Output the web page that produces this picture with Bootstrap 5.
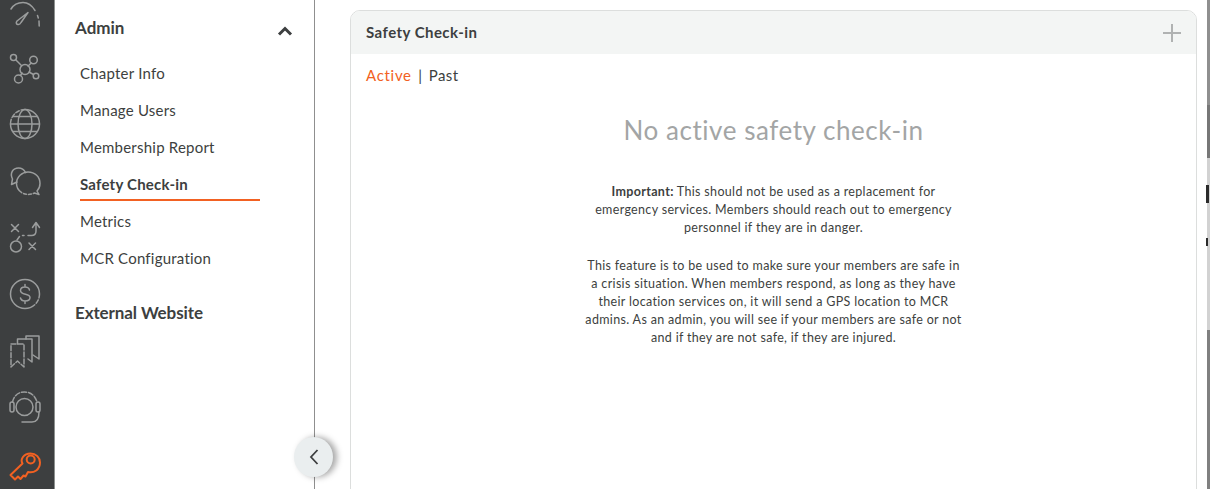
<!DOCTYPE html>
<html lang="en">
<head>
  <meta charset="UTF-8" />
  <meta name="viewport" content="width=device-width, initial-scale=1.0"/>
  <title>Safety Check-in</title>
  <link href="https://cdn.jsdelivr.net/npm/bootstrap@5.3.0/dist/css/bootstrap.min.css" rel="stylesheet"/>
  <style>
    html, body {
      height: 489px;
      overflow: hidden;
    }
    body {
      font-family: "Lato", "Liberation Sans", sans-serif;
      color: #3d3f40;
      background: #fff;
    }
    .app-shell {
      height: 489px;
      overflow: hidden;
    }
    .icon-rail {
      width: 55px;
      flex: none;
      background: #3d3f40;
      border-right: 1px solid #8d918f;
      padding-left: 9px;
    }
    .rail-stack {
      margin-top: -5px;
    }
    .rail-icon {
      display: block;
      width: 32px;
      height: 32px;
      margin-bottom: 24.6px;
      overflow: visible;
      fill: none;
      stroke: #9b9d9d;
      stroke-width: 1.5;
      stroke-linecap: round;
      stroke-linejoin: round;
    }
    .rail-icon.is-current {
      stroke: #f26122;
      stroke-width: 2;
    }
    .side-menu {
      width: 260px;
      flex: none;
      border-right: 1px solid #8f8f8f;
      padding: 17px 0 0 20px;
      position: relative;
    }
    .menu-head {
      font-size: 17px;
      font-weight: 700;
      line-height: 22px;
      width: 218px;
    }
    .menu-head.first-head {
      margin-bottom: 24px;
    }
    .menu-head.last-head {
      margin-top: 27px;
      letter-spacing: -.1px;
    }
    .menu-link {
      display: block;
      width: 180px;
      margin-left: 5px;
      font-size: 15px;
      line-height: 20px;
      height: 27px;
      margin-bottom: 10px;
      letter-spacing: .22px;
      color: #3d3f40;
      text-decoration: none;
    }
    .menu-link.is-current {
      font-weight: 700;
      border-bottom: 2px solid #f26122;
    }
    .collapse-btn {
      position: absolute;
      right: -19px;
      top: 437px;
      width: 39px;
      height: 40px;
      border: 0;
      border-radius: 50%;
      background: #eaeeef;
      box-shadow: 4px 0 6px rgba(0,0,0,.35);
      padding: 0;
    }
    .main-area {
      padding: 10px 13px 0 35px;
    }
    .check-panel {
      border: 1px solid #dcdedd;
      border-radius: 10px 10px 0 0;
      height: 500px;
    }
    .check-head {
      background: #f3f5f4;
      height: 43px;
      padding: 0 15px;
      border-radius: 9px 9px 0 0;
      font-size: 15px;
      font-weight: 700;
      letter-spacing: .45px;
    }
    .tab-row {
      font-size: 15px;
      line-height: 20px;
      padding: 11px 15px 0;
      letter-spacing: .35px;
      gap: 6.5px;
    }
    .tab-active {
      color: #f26122;
      letter-spacing: .7px;
    }
    .empty-title {
      font-size: 26px;
      font-weight: 400;
      color: #a3a5a5;
      text-align: center;
      line-height: 30px;
      margin: 30px 0 38px;
      letter-spacing: .55px;
    }
    .note-text {
      width: 378px;
      margin: 0 auto 20px;
      font-size: 12.5px;
      line-height: 18px;
      letter-spacing: .33px;
      text-align: center;
    }
    .edge-strip {
      position: absolute;
      right: 0;
      top: 0;
      bottom: 0;
      width: 3px;
    }
    .edge-top { height: 105px; background: #8f8f8f; }
    .edge-dark { height: 53px; background: #777; }
    .edge-light { height: 172px; background: #d2d2d2; position: relative; }
    .edge-low { flex: 1; background: #808080; }
    .edge-bit {
      position: absolute;
      left: -1px;
      width: 3px;
      background: #2b2b2b;
    }
    .edge-bit.bit-one { top: 27px; height: 18px; }
    .edge-bit.bit-two { top: 80px; height: 8px; width: 2px; }
  </style>
</head>
<body>

<div class="app-shell d-flex position-relative">
  <div class="icon-rail">
    <div class="rail-stack">
      <!-- gauge -->
      <svg class="rail-icon" viewBox="0 0 32 32"><path d="M2 14C5 9 9 7.500 14 7.500c5 0 9 3 12 8"/><path d="M28.500 20.500l.8 2.500M30 26l.2 5"/><path d="M19 17.500L8 26c-1.500 2-.5 3.800 1.500 3.500 1 0 2-1 2.500-2z"/></svg>
      <!-- network -->
      <svg class="rail-icon" viewBox="0 0 32 32"><circle cx="16" cy="17.500" r="5"/><circle cx="4.500" cy="5.500" r="3"/><circle cx="24.500" cy="8" r="3.800"/><circle cx="9.500" cy="27" r="4"/><circle cx="27" cy="24" r="2.800"/><path d="M6.700 7.700l6 6M22.300 11l-3.300 3M11.500 23.500l1.500-2.500M24.500 22.500l-4.500-2.500"/></svg>
      <!-- globe -->
      <svg class="rail-icon" viewBox="0 0 32 32"><circle cx="16" cy="16" r="14.500" stroke-dasharray="50 2 4 2 4 2 27"/><ellipse cx="16" cy="16" rx="7" ry="14.500"/><path d="M4 8.500h24M4 23.500h24M1.500 16h29"/></svg>
      <!-- chat -->
      <svg class="rail-icon" viewBox="0 0 32 32"><path d="M8 17L2.500 19.500 3.500 14C.5 8 4 3 9.500 3c3.500 0 5.500 1.500 7 4.500"/><path d="M30 29.500L25.500 28C17 32 7.500 27 7.500 18.500 7.500 12 13 7 19 7c7 0 12 5 12 11.500 0 3.500-1 5.500-3 7.500z" stroke-dasharray="6 2 3 2 3 2 70"/></svg>
      <!-- plays -->
      <svg class="rail-icon" viewBox="0 0 32 32"><path d="M2.500 3.500l7 7M9.500 3.500l-7 7M20 22l6.500 6.500M26.500 22L20 28.500M27 2v8c0 3-1.500 4.500-4.500 4.500H19M23.500 6.500L27 1.500l3.500 5M15 14.500h-1.500M10.500 15.500L8 19"/><circle cx="7" cy="25.500" r="5.500"/></svg>
      <!-- dollar -->
      <svg class="rail-icon" viewBox="0 0 32 32"><circle cx="16" cy="16" r="14.500" stroke-dasharray="4 2 4 2 79"/><path d="M20.500 12c-.5-2-2.500-3-4.500-3-3 0-4.500 1.500-4.500 3.500 0 5 9.500 2.500 9.500 7 0 2-2 3.500-5 3.500-2.500 0-4-1-4.500-3M16 6.500V9M16 23v2.500"/></svg>
      <!-- bookmarks -->
      <svg class="rail-icon" viewBox="0 0 32 32"><path d="M2 9h13v23l-6.500-6L2 32z" stroke-dasharray="5 2"/><path d="M8.500 9V4H23v23l-4-3"/><path d="M17 4V1h13v23l-6-4"/></svg>
      <!-- headset -->
      <svg class="rail-icon" viewBox="0 0 32 32"><circle cx="15.500" cy="16" r="8.500"/><path d="M3.500 11C5 4 10 1 15.500 1S26 4 28 11" stroke-dasharray="5 2"/><rect x="1" y="11" width="4" height="10" rx="2"/><rect x="27" y="11" width="4" height="10" rx="2"/><path d="M30 21c0 6-2.500 10-7 10h-10"/></svg>
      <!-- key -->
      <svg class="rail-icon is-current" viewBox="0 0 32 32"><path d="M13.500 15.500L1.500 27l4.500 4.500 3-3 2.500 2.500 3-3.500 2 1 2.500-4.500c6 1.500 12-2.500 12-9.500 0-5-4-9-9.500-9-7 0-10.500 6-8 10z"/><circle cx="21.700" cy="11.500" r="4"/></svg>
    </div>
  </div>

  <div class="side-menu">
    <div class="menu-head first-head d-flex justify-content-between">
      <span>Admin</span>
      <svg class="mt-2" width="16" height="12" viewBox="0 0 16 11" fill="none" stroke="#3d3f40" stroke-width="3"><path d="M2 9l6-6 6 6"/></svg>
    </div>
    <a class="menu-link" href="#">Chapter Info</a>
    <a class="menu-link" href="#">Manage Users</a>
    <a class="menu-link" href="#">Membership Report</a>
    <a class="menu-link is-current" href="#">Safety Check-in</a>
    <a class="menu-link" href="#">Metrics</a>
    <a class="menu-link" href="#">MCR Configuration</a>
    <div class="menu-head last-head">External Website</div>
    <button class="collapse-btn d-flex align-items-center justify-content-center" type="button" aria-label="Collapse">
      <svg width="10" height="18" viewBox="0 0 10 18" fill="none" stroke="#3d3f40" stroke-width="1.800"><path d="M8.500 2L2 9l6.500 7"/></svg>
    </button>
  </div>

  <div class="main-area flex-grow-1">
    <div class="check-panel">
      <div class="check-head d-flex align-items-center justify-content-between">
        <span>Safety Check-in</span>
        <svg width="18" height="18" viewBox="0 0 18 18" stroke="#b0b2b2" stroke-width="2"><path d="M9 0v18M0 9h18"/></svg>
      </div>
      <div class="tab-row d-flex"><span class="tab-active">Active</span><span>|</span><span>Past</span></div>
      <h2 class="empty-title">No active safety check-in</h2>
      <p class="note-text"><strong>Important:</strong> This should not be used as a replacement for emergency services. Members should reach out to emergency personnel if they are in danger.</p>
      <p class="note-text">This feature is to be used to make sure your members are safe in a crisis situation. When members respond, as long as they have their location services on, it will send a GPS location to MCR admins. As an admin, you will see if your members are safe or not and if they are not safe, if they are injured.</p>
    </div>
  </div>
  <div class="edge-strip d-flex flex-column">
    <div class="edge-top"></div>
    <div class="edge-dark"></div>
    <div class="edge-light"><span class="edge-bit bit-one"></span><span class="edge-bit bit-two"></span></div>
    <div class="edge-low"></div>
  </div>
</div>

</body>
</html>
